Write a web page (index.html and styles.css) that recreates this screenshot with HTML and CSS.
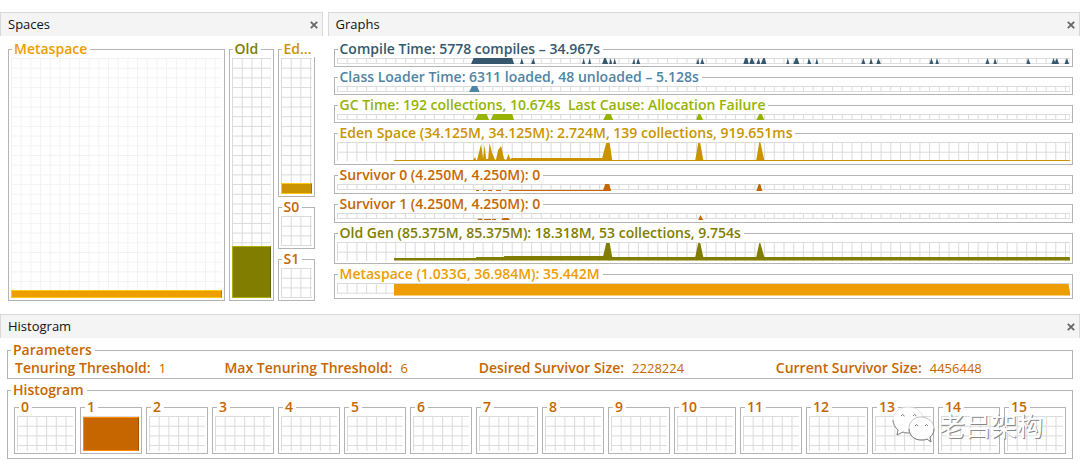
FILE: index.html
```html
<!DOCTYPE html>
<html lang="en">
<head>
<meta charset="utf-8">
<title>Visual GC</title>
<link rel="stylesheet" href="styles.css">
</head>
<body>
<svg class="defs" aria-hidden="true">
  <defs>
    <pattern id="grid" width="9.7" height="9.7" patternUnits="userSpaceOnUse"><path d="M0 .5H9.7M.5 0V9.7" stroke="#dadada" fill="none"/></pattern>
    <pattern id="grid-light" width="9.7" height="9.7" patternUnits="userSpaceOnUse"><path d="M0 .5H9.7M.5 0V9.7" stroke="#f2f2f2" fill="none"/></pattern>
    <symbol id="close" viewBox="0 0 8 8"><path d="M.8 .8L7.200 7.200M7.200 .8L.8 7.200" stroke="#666" stroke-width="1.8" fill="none"/></symbol>
  </defs>
</svg>
<main class="page">
  <div class="top">
    <section class="panel">
      <header class="bar"><h2>Spaces</h2><button class="close" aria-label="Close Spaces"><svg><use href="#close"/></svg></button></header>
      <div class="spaces">
        <fieldset class="frame meta"><legend>Metaspace</legend><div class="cell"><svg class="grid"><rect width="100%" height="100%" fill="url(#grid-light)"/></svg><div class="fill" style="height:3.5%"></div></div></fieldset>
        <fieldset class="frame old"><legend>Old</legend><div class="cell"><svg class="grid"><rect width="100%" height="100%" fill="url(#grid)"/></svg><div class="fill" style="height:21.5%"></div></div></fieldset>
        <div class="young">
          <fieldset class="frame eden"><legend>Ed...</legend><div class="cell"><svg class="grid"><rect width="100%" height="100%" fill="url(#grid)"/></svg><div class="fill" style="height:8%"></div></div></fieldset>
          <fieldset class="frame surv"><legend>S0</legend><div class="cell"><svg class="grid"><rect width="100%" height="100%" fill="url(#grid)"/></svg></div></fieldset>
          <fieldset class="frame surv"><legend>S1</legend><div class="cell"><svg class="grid"><rect width="100%" height="100%" fill="url(#grid)"/></svg></div></fieldset>
        </div>
      </div>
    </section>
    <section class="panel">
      <header class="bar"><h2>Graphs</h2><button class="close" aria-label="Close Graphs"><svg><use href="#close"/></svg></button></header>
      <div class="graphs">
        <fieldset class="frame compile"><legend>Compile Time: 5778 compiles – 34.967s</legend>
          <svg class="plot thin" viewBox="0 0 733 6" preserveAspectRatio="none"><rect width="733" height="6" fill="url(#grid)"/><path d="M0 5.5H733M732.5 0V6" class="edge"/><path d="M134 6L136.500 0H175L177 6zM183 6L184.500 0 186.500 6zM194 6L196.500 0 198 6zM245 6L246.500 0 248 6zM251 6L252.500 0 254 6zM265 6L267 0H268.500L271 6zM272 6L273.500 0 275 6zM276 6L277.500 0 279 6zM295 6L297 0 298 6zM299 6L301 0 303 6zM359 6L361 0 362 6zM363 6L365 0 367 6zM406 6L408 0H410L411.500 6zM412 6L414 0H415L417.500 6zM419 6L421.500 0 423 6zM423.500 6L426 0H427.500L429 6zM449 6L450.500 0 452 6zM456 6L458.500 0H460L462 6zM470 6L471.500 0 474 6zM478 6L479.500 0 481 6zM524 6L526 0 528 6zM532 6L533.500 0 535.500 6zM539 6L541 0 543.500 6zM592 6L594 0 596 6zM598 6L599.500 0 601.500 6zM648 6L650 0 652 6zM656 6L657.500 0 659.500 6zM689 6L690.500 0 693 6zM714 6L716 0 717.500 4 719.500 0 721.500 6zM727 6L729.500 0 731.500 6z"/></svg></fieldset>
        <fieldset class="frame loader"><legend>Class Loader Time: 6311 loaded, 48 unloaded – 5.128s</legend>
          <svg class="plot thin" viewBox="0 0 733 6" preserveAspectRatio="none"><rect width="733" height="6" fill="url(#grid)"/><path d="M0 5.5H733M732.5 0V6" class="edge"/><path d="M132 6L135 0H140L142.500 6z"/></svg></fieldset>
        <fieldset class="frame gc"><legend>GC Time: 192 collections, 10.674s&nbsp; Last Cause: Allocation Failure</legend>
          <svg class="plot thin" viewBox="0 0 733 6" preserveAspectRatio="none"><rect width="733" height="6" fill="url(#grid)"/><path d="M0 5.5H733M732.5 0V6" class="edge"/><path d="M138 6L141 0H149.500L152 6zM153.500 6L156.500 0H175L177 6zM266 6L269 0H273.500L276 6zM359 6L361 0H363L366 6zM419 6L422 0H424.500L427 6z"/></svg></fieldset>
        <fieldset class="frame eden"><legend>Eden Space (34.125M, 34.125M): 2.724M, 139 collections, 919.651ms</legend>
          <svg class="plot tall" viewBox="0 0 733 20" preserveAspectRatio="none"><rect width="733" height="19" fill="url(#grid)"/><path d="M732.5 0V19" class="edge"/><path d="M57 19V18H136L138 15 139 18H140L144 2 146 17 147.500 3 149 17 151 17 152.500 1 155 11 158 18 159 17 161 8 164 4 167 17 169 18 171.500 12 173 17 175 16H265L269 1H272.500L275 18H358L361 1H363L366 18H419L422 0H423L427 18H733V19z"/></svg></fieldset>
        <fieldset class="frame surv"><legend>Survivor 0 (4.250M, 4.250M): 0</legend>
          <svg class="plot low" viewBox="0 0 733 7" preserveAspectRatio="none"><rect width="733" height="6" fill="url(#grid)"/><path d="M0 5.5H733M732.5 0V6" class="edge"/><path d="M139 6H142V7H139zM146 6H148L149 7H146zM151 6H155V7H151zM159 6H164V7H159zM172 7V6H266L268 0H272L274 7zM419 7L421.500 0H423L425 7z"/></svg></fieldset>
        <fieldset class="frame surv"><legend>Survivor 1 (4.250M, 4.250M): 0</legend>
          <svg class="plot low" viewBox="0 0 733 7" preserveAspectRatio="none"><rect width="733" height="6" fill="url(#grid)"/><path d="M0 5.500H733M732.500 0V6" class="edge"/><path d="M140 7L142 5.500H144L146 7zM147 6H154V7H147zM155 6H159V7H155zM164 7L166 5H171L173 7zM361 7L363 2 366 7z"/></svg></fieldset>
        <fieldset class="frame old"><legend>Old Gen (85.375M, 85.375M): 18.318M, 53 collections, 9.754s</legend>
          <svg class="plot mid" viewBox="0 0 733 19" preserveAspectRatio="none"><rect width="733" height="19" fill="url(#grid)"/><path d="M732.5 0V19" class="edge"/><path d="M57 18.500V16H139V15H167V14H266L269 1H272.500L275 15H358L361 1H363L366 15H419L422 1H423L427 15H732L733 18.500z"/></svg></fieldset>
        <fieldset class="frame meta"><legend>Metaspace (1.033G, 36.984M): 35.442M</legend>
          <svg class="plot wide" viewBox="0 0 733 13" preserveAspectRatio="none"><rect width="733" height="11" fill="url(#grid)"/><path d="M57 12.500V1H731L733 12.500z"/></svg></fieldset>
      </div>
    </section>
  </div>
  <section class="panel histogram">
    <header class="bar"><h2>Histogram</h2><button class="close" aria-label="Close Histogram"><svg><use href="#close"/></svg></button></header>
    <div class="details">
      <fieldset class="frame surv"><legend>Parameters</legend>
        <dl class="params">
          <div><dt>Tenuring Threshold:</dt><dd>1</dd></div>
          <div><dt>Max Tenuring Threshold:</dt><dd>6</dd></div>
          <div><dt>Desired Survivor Size:</dt><dd>2228224</dd></div>
          <div><dt>Current Survivor Size:</dt><dd>4456448</dd></div>
        </dl>
      </fieldset>
      <fieldset class="frame surv"><legend>Histogram</legend>
        <div class="bins">
          <fieldset class="frame bin"><legend>0</legend><div class="cell"><svg class="grid"><rect width="100%" height="100%" fill="url(#grid)"/></svg></div></fieldset>
          <fieldset class="frame bin"><legend>1</legend><div class="cell"><svg class="grid"><rect width="100%" height="100%" fill="url(#grid)"/></svg><div class="fill" style="height:97%"></div></div></fieldset>
          <fieldset class="frame bin"><legend>2</legend><div class="cell"><svg class="grid"><rect width="100%" height="100%" fill="url(#grid)"/></svg></div></fieldset>
          <fieldset class="frame bin"><legend>3</legend><div class="cell"><svg class="grid"><rect width="100%" height="100%" fill="url(#grid)"/></svg></div></fieldset>
          <fieldset class="frame bin"><legend>4</legend><div class="cell"><svg class="grid"><rect width="100%" height="100%" fill="url(#grid)"/></svg></div></fieldset>
          <fieldset class="frame bin"><legend>5</legend><div class="cell"><svg class="grid"><rect width="100%" height="100%" fill="url(#grid)"/></svg></div></fieldset>
          <fieldset class="frame bin"><legend>6</legend><div class="cell"><svg class="grid"><rect width="100%" height="100%" fill="url(#grid)"/></svg></div></fieldset>
          <fieldset class="frame bin"><legend>7</legend><div class="cell"><svg class="grid"><rect width="100%" height="100%" fill="url(#grid)"/></svg></div></fieldset>
          <fieldset class="frame bin"><legend>8</legend><div class="cell"><svg class="grid"><rect width="100%" height="100%" fill="url(#grid)"/></svg></div></fieldset>
          <fieldset class="frame bin"><legend>9</legend><div class="cell"><svg class="grid"><rect width="100%" height="100%" fill="url(#grid)"/></svg></div></fieldset>
          <fieldset class="frame bin"><legend>10</legend><div class="cell"><svg class="grid"><rect width="100%" height="100%" fill="url(#grid)"/></svg></div></fieldset>
          <fieldset class="frame bin"><legend>11</legend><div class="cell"><svg class="grid"><rect width="100%" height="100%" fill="url(#grid)"/></svg></div></fieldset>
          <fieldset class="frame bin"><legend>12</legend><div class="cell"><svg class="grid"><rect width="100%" height="100%" fill="url(#grid)"/></svg></div></fieldset>
          <fieldset class="frame bin"><legend>13</legend><div class="cell"><svg class="grid"><rect width="100%" height="100%" fill="url(#grid)"/></svg></div></fieldset>
          <fieldset class="frame bin"><legend>14</legend><div class="cell"><svg class="grid"><rect width="100%" height="100%" fill="url(#grid)"/></svg></div></fieldset>
          <fieldset class="frame bin"><legend>15</legend><div class="cell"><svg class="grid"><rect width="100%" height="100%" fill="url(#grid)"/></svg></div></fieldset>
        </div>
      </fieldset>
    </div>
    <div class="watermark">
      <svg viewBox="0 0 44 38" aria-hidden="true">
        <g fill="#fff" fill-opacity=".85" stroke-linejoin="round">
          <path d="M16 1C7 1 1 7 1 14c0 4 2 7 5 10l-1 5 6-3c2 1 4 1 7 1 8-1 13-6 13-13C31 6 25 1 16 1z" stroke="#d8d8d8" stroke-width=".7"/>
          <path d="M1 14c0 4 2 7 5 10l-1 5 6-3c2 1 4 1 6 1" fill="none" stroke="#777" stroke-width=".9"/>
          <path d="M29 11c-7 0-12 5-12 11.500S22 34 29 34c2 0 4 0 6-1l4 3-1-5c3-2 4-5 4-8.500C42 16 36 11 29 11z" stroke="#aaa" stroke-width=".7"/>
          <path d="M17 23c0 6 5 11 12 11 2 0 4 0 6-1l4 3-1-5c3-2 4-5 4-8.500" fill="none" stroke="#777" stroke-width=".9"/>
        </g>
        <path d="M9 10q1.500-3 3.500 0M21 10q1.500-3 3.500 0M23 20q1.500-3 3 0M33 20q1.500-3 3 0" fill="none" stroke="#777"/>
      </svg>
      <span>老吕架构</span>
    </div>
  </section>
</main>
</body>
</html>
```
FILE: styles.css
```css
* { box-sizing: border-box; }

body {
  margin: 0;
  background: #fff;
  color: #111;
  font: 13px/16px "Open Sans", "Noto Sans", "Noto Sans CJK SC", sans-serif;
}

h2, dl, dd { margin: 0; }

.defs { position: absolute; width: 0; height: 0; }

.page { padding-top: 12px; }

.top {
  display: grid;
  grid-template-columns: minmax(0, 3fr) minmax(0, 7fr);
  gap: 5px;
}

.panel { display: flex; flex-direction: column; }

.bar {
  display: flex;
  align-items: center;
  justify-content: space-between;
  height: 24px;
  padding: 0 4px 0 7px;
  background: #f4f4f4;
  border: 1px solid #d9d9d9;
  border-bottom: 0;
}

.bar h2 { padding-bottom: 1px; font-size: 13px; font-weight: 400; }

.close {
  display: flex;
  padding: 0;
  border: 0;
  background: none;
}

.close svg { width: 8px; height: 8px; }

.frame {
  min-width: 0;
  margin: 0;
  padding: 1px 2px 2px;
  border: 1px solid #b4b4b4;
}

.frame > legend {
  margin-left: 1px;
  padding: 0 3px 0 2px;
  font-size: 14px;
  line-height: 16px;
  font-weight: 600;
  white-space: nowrap;
}

.meta { color: #ee9d00; --hi: #ffc814; }
.old { color: #807d00; --hi: #b0ad00; }
.eden { color: #c99400; --hi: #ffc814; }
.surv { color: #c66600; --hi: #ff8c00; }
.compile { color: #35586e; }
.loader { color: #4f84a5; }
.gc { color: #97b300; }

.spaces {
  display: grid;
  grid-template-columns: minmax(0, 1fr) 45px 37px;
  flex: 1;
  gap: 4px;
  padding: 5px 8px 13px;
}

.young { display: flex; flex-direction: column; gap: 2px; }
.young .eden { flex: 1; }
.young .surv .cell { height: 30px; }

.cell {
  display: flex;
  flex-direction: column;
  justify-content: flex-end;
  position: relative;
  height: 100%;
}

.grid { position: absolute; inset: 0; width: 100%; height: 100%; }

.fill {
  position: relative;
  background: currentColor;
  border: 1px solid var(--hi);
  border-right-color: rgb(0 0 0 / 20%);
}

.graphs {
  display: flex;
  flex-direction: column;
  gap: 2px;
  padding: 5px 7px 15px 6px;
}

.plot { display: block; width: 100%; fill: currentColor; }
.plot .edge { stroke: #dedede; fill: none; }
.thin { height: 6px; }
.low { height: 7px; }
.wide { height: 13px; }
.mid { height: 19px; }
.tall { height: 20px; }

.histogram { position: relative; }

.details {
  display: flex;
  flex-direction: column;
  gap: 3px;
  padding: 4px 7px 12px;
}

.params {
  display: grid;
  grid-template-columns: 210fr 255fr 298fr 290fr;
  padding: 1px 5px 0;
}

.params div { display: flex; gap: 8px; white-space: nowrap; }
.params dt { font-size: 14px; font-weight: 600; }
.params dd { font-size: 13px; }

.bins {
  display: grid;
  grid-template-columns: repeat(16, minmax(0, 1fr));
  gap: 4px;
  padding: 0 4px 2px;
}

.bin .cell { height: 35px; }
.bins .bin > legend { margin-left: 2px; }

.watermark {
  position: absolute;
  right: 37px;
  bottom: 27px;
  display: flex;
  align-items: center;
  gap: 3px;
  color: #fff;
  font: 26px/32px "Noto Sans CJK SC", sans-serif;
  text-shadow: 1px 1px 0 #888;
}

.watermark svg { width: 44px; height: 38px; }
```
